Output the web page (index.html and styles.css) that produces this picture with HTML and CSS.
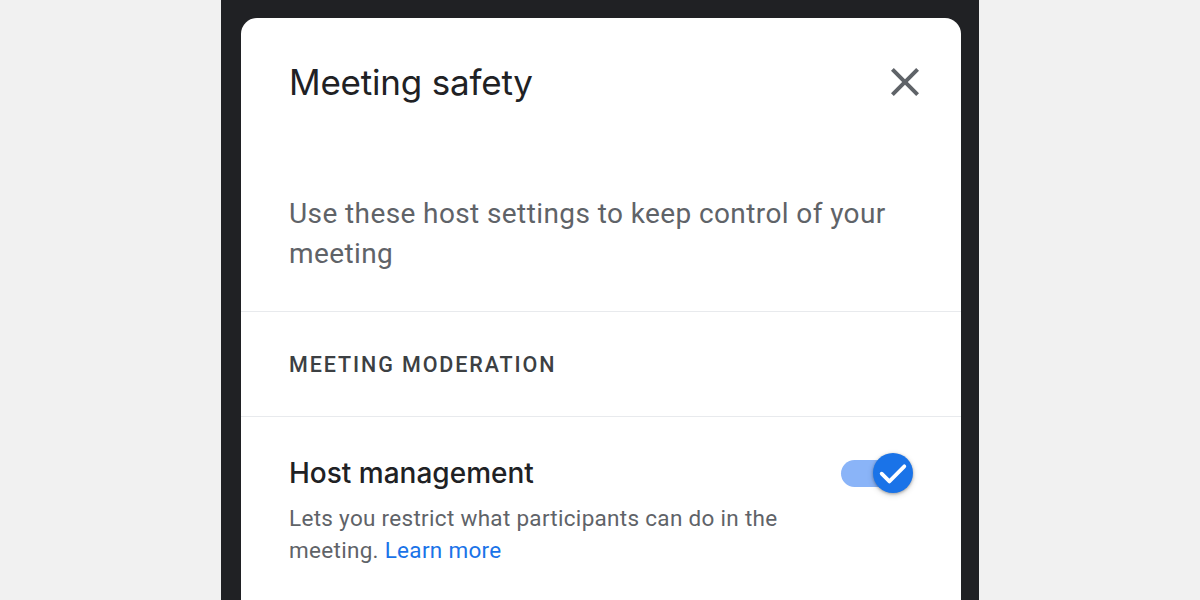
FILE: index.html
```html
<!DOCTYPE html>
<html>
<head>
    <meta charset="UTF-8">
    <title>Meeting safety</title>
    <link rel="stylesheet" href="styles.css">
</head>
<body>
    <div class="frame">
        <div class="dialog">
            <header class="dialog-header">
                <h1>Meeting safety</h1>
                <button class="close-btn" aria-label="Close">
                    <svg viewBox="0 0 24 24" width="48" height="48">
                        <path d="M19 6.41 17.59 5 12 10.59 6.41 5 5 6.41 10.59 12 5 17.59 6.41 19 12 13.41 17.59 19 19 17.59 13.41 12z" fill="#5f6368"/>
                    </svg>
                </button>
            </header>

            <p class="intro">Use these host settings to keep control of your meeting</p>

            <div class="section-label">Meeting moderation</div>

            <div class="setting">
                <div class="setting-text">
                    <h2>Host management</h2>
                    <p>Lets you restrict what participants can do in the meeting. <a href="#">Learn more</a></p>
                </div>
                <div class="toggle on">
                    <span class="track"></span>
                    <span class="thumb">
                        <svg viewBox="0 0 24 24" width="32" height="32">
                            <path d="M3.5 12.5l5.8 5.8L20.5 7" fill="none" stroke="#fff" stroke-width="2.8" stroke-linecap="round" stroke-linejoin="round"/>
                        </svg>
                    </span>
                </div>
            </div>
        </div>
    </div>
</body>
</html>
```

FILE: styles.css
```css
:root {
    --page-bg: #f1f1f1;
    --frame-bg: #202124;
    --text-main: #202124;
    --text-sub: #5f6368;
    --text-label: #3c4043;
    --divider: #e8eaed;
    --blue: #1a73e8;
    --blue-light: #8ab4f8;
}
html, body {
    height: 100%;
}
body {
    margin: 0;
    background-color: var(--page-bg);
    font-family: Roboto, "Liberation Sans", sans-serif;
    display: flex;
    justify-content: center;
    overflow: hidden;
}
.frame {
    width: 758px;
    height: 100%;
    background-color: var(--frame-bg);
    padding: 18px 18px 0 20px;
    box-sizing: border-box;
}
.dialog {
    background-color: #fff;
    border-radius: 16px 16px 0 0;
    height: 100%;
}
.dialog-header {
    height: 128px;
    display: flex;
    align-items: center;
    justify-content: space-between;
    padding: 0 32px 0 48px;
}
.dialog-header h1 {
    margin: 0;
    font-family: Inter, "Open Sans", sans-serif;
    font-weight: 400;
    font-size: 35px;
    color: var(--text-main);
    letter-spacing: -0.2px;
}
.close-btn {
    background: none;
    border: none;
    padding: 0;
    width: 48px;
    height: 48px;
    cursor: pointer;
}
.close-btn svg {
    display: block;
}
.intro {
    margin: 0;
    padding: 48px 48px 37px;
    font-size: 28px;
    line-height: 40px;
    letter-spacing: 0.4px;
    color: var(--text-sub);
    border-bottom: 1px solid var(--divider);
}
.section-label {
    height: 104px;
    display: flex;
    align-items: center;
    padding: 0 48px;
    font-size: 21.5px;
    font-weight: 500;
    letter-spacing: 1.9px;
    text-transform: uppercase;
    color: var(--text-label);
    border-bottom: 1px solid var(--divider);
}
.setting {
    display: flex;
    justify-content: space-between;
    align-items: flex-start;
    padding: 38px 48px 0;
}
.setting-text h2 {
    margin: 0;
    font-family: Inter, "Open Sans", sans-serif;
    font-weight: 500;
    font-size: 28px;
    line-height: 36px;
    color: var(--text-main);
}
.setting-text p {
    margin: 11px 0 0;
    width: 520px;
    font-size: 22.5px;
    line-height: 32px;
    letter-spacing: 0.3px;
    color: var(--text-sub);
}
.setting-text a {
    color: var(--blue);
    text-decoration: none;
}
.toggle {
    position: relative;
    flex-shrink: 0;
    width: 72px;
    height: 40px;
    margin-top: -2px;
}
.toggle .track {
    position: absolute;
    left: 0;
    top: 7px;
    width: 64px;
    height: 27px;
    border-radius: 14px;
    background-color: var(--blue-light);
}
.toggle .thumb {
    position: absolute;
    right: 0;
    top: 0;
    width: 40px;
    height: 40px;
    border-radius: 50%;
    background-color: var(--blue);
    box-shadow: 0 1px 3px rgba(0, 0, 0, 0.3), 0 2px 6px rgba(0, 0, 0, 0.15);
    display: flex;
    align-items: center;
    justify-content: center;
}
```
